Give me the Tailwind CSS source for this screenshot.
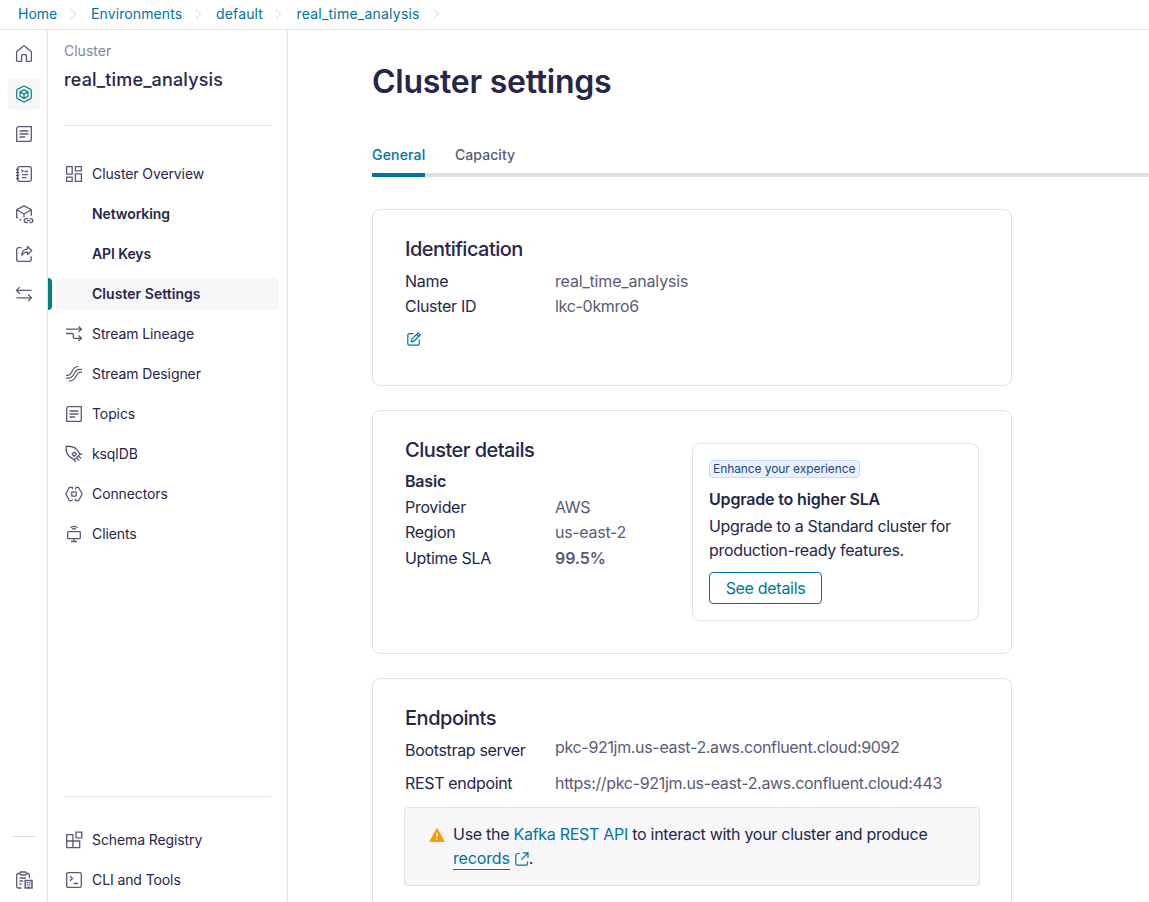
<!DOCTYPE html>
<html lang="en">
<head>
<meta charset="utf-8">
<title>Cluster settings</title>
<script src="https://cdn.jsdelivr.net/npm/@tailwindcss/browser@4"></script>
</head>
<body class="h-[902px] w-[1149px] overflow-hidden bg-white font-['Inter',sans-serif] text-[#26264b]">
<div class="flex h-full flex-col">
  <header class="flex h-[30px] shrink-0 items-center border-b border-[#e4e4ea] pb-px pl-[18px] text-sm text-[#0074a2]">
    <a class="w-[39px] whitespace-nowrap">Home</a>
    <svg class="ml-3 mr-[14px] h-3 w-2" viewBox="0 0 8 12" fill="none" stroke="#d0d0dc"><path d="M1.5 1l5 5-5 5"/></svg>
    <a class="w-[91px] tracking-[0.1px] whitespace-nowrap">Environments</a>
    <svg class="ml-3 mr-[14px] h-3 w-2" viewBox="0 0 8 12" fill="none" stroke="#d0d0dc"><path d="M1.5 1l5 5-5 5"/></svg>
    <a class="w-[46px] tracking-[0.15px] whitespace-nowrap">default</a>
    <svg class="ml-3 mr-[14px] h-3 w-2" viewBox="0 0 8 12" fill="none" stroke="#d0d0dc"><path d="M1.5 1l5 5-5 5"/></svg>
    <a class="w-[124px] pl-[0.5px] tracking-[0.22px] whitespace-nowrap">real_time_analysis</a>
    <svg class="ml-3 h-3 w-2" viewBox="0 0 8 12" fill="none" stroke="#d0d0dc"><path d="M1.5 1l5 5-5 5"/></svg>
  </header>

  <div class="flex min-h-0 flex-1">
    <nav class="flex w-12 shrink-0 flex-col items-center gap-2 border-r border-[#e4e4ea] pt-2 pb-[6px] pl-px text-[#5a5a78]">
      <a class="grid size-8 shrink-0 place-items-center"><svg class="size-[18px]" viewBox="0 0 18 18" fill="none" stroke="currentColor" stroke-width="1.3" stroke-linejoin="round"><path d="M6.6 16.4H2.8a1.2 1.2 0 0 1-1.2-1.2V7.2c0-.4.2-.8.5-1L8.3 1.200a1.100 1.100 0 0 1 1.400 0l6.200 5c.3.2.5.6.5 1v8a1.200 1.200 0 0 1-1.200 1.200h-3.800v-6a.8.8 0 0 0-.8-.8H7.400a.8.8 0 0 0-.8.8z"/></svg></a>
      <a class="grid size-8 shrink-0 place-items-center rounded bg-[#f7f7fa] text-[#00807f]"><svg class="size-[18px]" viewBox="0 0 18 18" fill="none" stroke="currentColor" stroke-width="1.200" stroke-linejoin="round"><path d="M8.300 1.200a1.400 1.400 0 0 1 1.400 0l5.900 3.200c.4.3.7.7.7 1.200v6.800c0 .5-.3.900-.7 1.200l-5.900 3.200a1.400 1.400 0 0 1-1.400 0l-5.900-3.200a1.400 1.400 0 0 1-.7-1.200V5.600c0-.5.3-.9.7-1.200z"/><path d="M9 4.700l4 2.200v4.300l-4 2.200-4-2.200V6.900zM5 6.900l4 2.200 4-2.200M9 9.100v4.300"/></svg></a>
      <a class="grid size-8 shrink-0 place-items-center"><svg class="size-[18px]" viewBox="0 0 18 18" fill="none" stroke="currentColor" stroke-width="1.3"><path d="M3.600 1.700h12.700v12.700a2 2 0 0 1-2 2H1.700V3.600a2 2 0 0 1 1.900-1.900zM4.500 6h9M4.500 9h9M4.500 12h5.500"/></svg></a>
      <a class="grid size-8 shrink-0 place-items-center"><svg class="size-[18px]" viewBox="0 0 18 18" fill="none" stroke="currentColor" stroke-width="1.3"><rect x="2.700" y="1.700" width="13.600" height="14.600" rx="1.800"/><path d="M1 4.500h3.200M1 7.500h3.200M1 10.500h3.200M1 13.500h3.200M6.500 4.700L8 6 6.500 7.300M9.500 6.500H13M7 9.700h6M7 12.700h4.500"/></svg></a>
      <a class="grid size-8 shrink-0 place-items-center"><svg class="size-[18px] overflow-visible" viewBox="0 0 18 18" fill="none" stroke="currentColor" stroke-width="1.300" stroke-linejoin="round"><path d="M6.200 15.100l-1.600-.9M3 13.200l-1.300-.8V4.700L9 .9l7.300 3.800v6M1.700 4.800L9 9l7.300-4.200M9 9v3.500"/><path d="M13 13.600h-1.800a2 2 0 0 0 0 4H13M14.500 13.600h1.300a2 2 0 0 1 0 4h-1.300M11.800 15.600h3.600"/></svg></a>
      <a class="grid size-8 shrink-0 place-items-center"><svg class="size-[18px]" viewBox="0 0 18 18" fill="none" stroke="currentColor" stroke-width="1.300" stroke-linejoin="round"><path d="M6.500 2.700H3.700a2 2 0 0 0-2 2v9.600a2 2 0 0 0 2 2h10.500a2 2 0 0 0 2-2v-3"/><path d="M12.500 1.500l4.200 4-4.200 4V7.200C9.800 7 8 8.200 6.800 10.400 6.700 6.700 9 4 12.500 3.800z"/></svg></a>
      <a class="grid size-8 shrink-0 place-items-center"><svg class="size-[18px]" viewBox="0 0 18 18" fill="none" stroke="currentColor" stroke-width="1.300"><path d="M4.800 2.100L1.500 5.400l3.300 3.300M1.500 5.400h15M13.200 9.500l3.300 3.300-3.300 3.300M16.500 12.800h-15"/></svg></a>
      <div class="mt-auto mr-px mb-[19px] h-px w-[23px] bg-[#dcdce6]"></div>
      <a class="grid size-8 shrink-0 place-items-center"><svg class="size-[18px]" viewBox="0 0 18 18" fill="none" stroke="currentColor" stroke-width="1.300"><path d="M4.800 2.500H3.200a1.500 1.500 0 0 0-1.500 1.500v11.500A1.500 1.500 0 0 0 3.200 17h3.300M11.500 2.500h1.300A1.500 1.500 0 0 1 14.300 4v3M4.500 7h6.500M4.500 10h3.500M4.500 13h2"/><rect x="5" y="1" width="6.300" height="3" rx="1"/><path stroke-width="1.500" d="M10.200 9.500h6.800v7.500h-6.800zM12.500 11v1.300M14.800 11v1.300M12.500 13.200v1.200M14.800 13.200v1.200M13.600 17v-1.700"/></svg></a>
    </nav>

    <aside class="flex w-60 shrink-0 flex-col border-r border-[#e4e4ea] text-sm">
      <div class="px-4 pt-[11px]">
        <p class="leading-5 text-[#8585a0]">Cluster</p>
        <h2 class="mt-[7px] text-lg leading-6 font-medium tracking-[0.15px]">real_time_analysis</h2>
        <hr class="mt-[33px] border-[#e4e4ea]">
      </div>
      <ul class="mt-8 flex flex-col gap-2 leading-5 tracking-[-0.1px]">
        <li class="flex h-8 items-center pl-[17px]"><svg class="mr-[9px] size-[18px] text-[#5a5a78]" viewBox="0 0 18 18" fill="none" stroke="currentColor" stroke-width="1.300"><path d="M1.600 1.600h5.600v7.600H1.600zM10.400 1.600h6v4.200h-6zM10.400 8.800h6v7.600h-6zM1.600 12.200h5.600v4.200H1.600z"/></svg>Cluster Overview</li>
        <li class="flex h-8 items-center pl-11 font-semibold">Networking</li>
        <li class="flex h-8 items-center pl-11 font-semibold">API Keys</li>
        <li class="flex h-8 items-center font-semibold"><span class="h-8 w-1 rounded-r bg-[#00807f]"></span><span class="ml-1 mr-2 flex h-8 flex-1 items-center rounded bg-[#f7f7fa] pl-9 tracking-[0.04px]">Cluster Settings</span></li>
        <li class="flex h-8 items-center pl-[17px]"><svg class="mr-[9px] size-[18px] text-[#5a5a78]" viewBox="0 0 18 18" fill="none" stroke="currentColor" stroke-width="1.300"><path d="M1 4.200h15.500M13.500 1.500l3 2.700-3 2.700M1 8.500h6.300a1 1 0 0 1 1 1v2.800a1 1 0 0 0 1 1h7.200M13.500 10.600l3 2.700-3 2.700"/></svg>Stream Lineage</li>
        <li class="flex h-8 items-center pl-[17px]"><svg class="mr-[9px] size-[18px] text-[#5a5a78]" viewBox="0 0 18 18" fill="none" stroke="currentColor" stroke-width="1.200"><path d="M1 10.400h1.500C8.300 10.400 5.500 1.500 13.500 1.500M1 13.100h2C10.600 13.100 8 4.300 14.500 4.300H17M4 16.200C12.500 16.200 10.500 7.100 15 7.100h2"/></svg>Stream Designer</li>
        <li class="flex h-8 items-center pl-[17px]"><svg class="mr-[9px] size-[18px] text-[#5a5a78]" viewBox="0 0 18 18" fill="none" stroke="currentColor" stroke-width="1.300"><path d="M3.600 1.700h12.700v12.700a2 2 0 0 1-2 2H1.700V3.600a2 2 0 0 1 1.900-1.900zM4.500 6h9M4.500 9h9M4.500 12h5.500"/></svg>Topics</li>
        <li class="flex h-8 items-center pl-[17px]"><svg class="mr-[9px] size-[18px] text-[#5a5a78]" viewBox="0 0 18 18" fill="none" stroke="currentColor" stroke-width="1.300" stroke-linejoin="round"><path d="M1 1.300c4.500-.3 8.500.5 11 3.400l3 4.400-5.700 5.800-4.500-3C1.800 9.300.8 5.800 1 1.300z"/><path d="M9.300 7l2.200 2.200-2.200 2.200-2.200-2.200zM15 9.100l2.300.2M13.300 10.900l2.900 2.700M11.600 12.700l2.600 2.900M9.300 14.900l1.200 2"/></svg>ksqlDB</li>
        <li class="flex h-8 items-center pl-[17px]"><svg class="mr-[9px] size-[18px] text-[#5a5a78]" viewBox="0 0 18 18" fill="none" stroke="currentColor" stroke-width="1.300" stroke-linejoin="round"><path d="M7.400 4.200V2.300H4.500L.8 9l3.700 6.700h1.800a1.100 1.100 0 0 0 1.100-1.100M10.600 13.800v1.900h2.900L17.200 9l-3.700-6.700h-1.800a1.100 1.100 0 0 0-1.100 1.100v1"/><rect x="6.800" y="6.800" width="4.400" height="4.400" rx=".5"/></svg>Connectors</li>
        <li class="flex h-8 items-center pl-[17px]"><svg class="mr-[9px] size-[18px] text-[#5a5a78]" viewBox="0 0 18 18" fill="none" stroke="currentColor" stroke-width="1.300"><rect x="2.700" y="6.700" width="12.600" height="7" rx=".6"/><path d="M9 13.700v2.600M6 16.500h6M5.500 2.700C7.300.8 10.700.8 12.500 2.700M7.200 4.300c1-.9 2.600-.9 3.600 0"/></svg>Clients</li>
      </ul>
      <div class="mt-auto px-4"><hr class="border-[#e4e4ea]"></div>
      <ul class="mt-[27px] flex flex-col gap-2 pb-[6px] leading-5 tracking-[-0.1px]">
        <li class="flex h-8 items-center pl-[17px]"><svg class="mr-[9px] size-[18px] text-[#5a5a78]" viewBox="0 0 18 18" fill="none" stroke="currentColor" stroke-width="1.300"><path d="M7.900 16.600H1.700v-13h6.200zM1.700 10h13v6.600H7.900V10M11 1.200h5.700v5.700H11z"/></svg>Schema Registry</li>
        <li class="flex h-8 items-center pl-[17px]"><svg class="mr-[9px] size-[18px] text-[#5a5a78]" viewBox="0 0 18 18" fill="none" stroke="currentColor" stroke-width="1.300"><rect x="1.700" y="1.700" width="14.600" height="14.600" rx="1.200"/><path d="M5 5l2.500 2.400L5 9.800M8.500 12.500h4.500"/></svg>CLI and Tools</li>
      </ul>
    </aside>

    <main class="flex min-w-0 flex-1 flex-col pl-[84px]">
      <h1 class="pt-8 text-[32px] leading-10 font-semibold tracking-[-0.26px]">Cluster settings</h1>
      <div class="mt-[41px] flex h-[34px] shrink-0 gap-[30px] border-b-4 border-[#dedee8] text-sm leading-5 font-medium text-[#5a5a78]">
        <a class="h-[34px] w-[53px] border-b-4 border-[#0074a2] pt-[2px] tracking-[0.18px] whitespace-nowrap text-[#0074a2]">General</a>
        <a class="pt-[2px] tracking-[0.06px]">Capacity</a>
      </div>

      <section class="mt-8 h-[177px] w-[640px] shrink-0 rounded-lg border border-[#e0e0e8] px-8 pt-6">
        <h3 class="text-xl leading-[30px] font-medium tracking-[-0.53px]">Identification</h3>
        <dl class="mt-[5px] grid grid-cols-[150px_1fr] text-base leading-[25px] tracking-[-0.3px]">
          <dt>Name</dt><dd class="tracking-[-0.17px] text-[#5a5a78]">real_time_analysis</dd>
          <dt>Cluster ID</dt><dd class="text-[#5a5a78]">lkc-0kmro6</dd>
        </dl>
        <svg class="mt-[13px] ml-[2px] size-[14px]" viewBox="0 0 14 14" fill="none" stroke="#0074a2" stroke-width="1.200" stroke-linejoin="round"><path d="M6.500 1.700H2.200A1.400 1.400 0 0 0 .8 3.100v8.600a1.400 1.400 0 0 0 1.400 1.400h8.600a1.400 1.400 0 0 0 1.400-1.400V7.400"/><path d="M11 .8l2.200 2.200-6.300 6.200-2.700.6.600-2.700zM9.500 2.300l2.200 2.200"/></svg>
      </section>

      <section class="mt-6 flex h-[244px] w-[640px] shrink-0 justify-between rounded-lg border border-[#e0e0e8] pt-6 pr-8 pl-8">
        <div>
          <h3 class="text-xl leading-[30px] font-medium tracking-[-0.53px]">Cluster details</h3>
          <p class="mt-1 text-base leading-[25px] font-semibold tracking-[-0.2px]">Basic</p>
          <dl class="grid grid-cols-[150px_1fr] pt-px text-base leading-[25.300px] tracking-[-0.3px]">
            <dt>Provider</dt><dd class="text-[#5a5a78]">AWS</dd>
            <dt>Region</dt><dd class="text-[#5a5a78]">us-east-2</dd>
            <dt>Uptime SLA</dt><dd class="font-semibold tracking-[-0.1px] text-[#5a5a78]">99.5%</dd>
          </dl>
        </div>
        <div class="mt-2 h-[178px] w-[287px] rounded-lg border border-[#e0e0e8] px-4 pt-4">
          <span class="flex h-[18px] w-[151px] items-center rounded border border-[#c5dbfb] bg-[#ebf2fe] pl-[3px] text-xs tracking-[-0.08px] whitespace-nowrap text-[#21488a]">Enhance your experience</span>
          <p class="mt-[9px] text-base leading-6 font-semibold tracking-[-0.17px]">Upgrade to higher SLA</p>
          <p class="mt-[3px] text-base leading-6 tracking-[-0.33px]">Upgrade to a Standard cluster for production-ready features.</p>
          <button class="mt-[10px] flex h-8 w-[113px] items-center justify-center rounded border border-[#0074a2] text-base tracking-[-0.3px] text-[#0074a2]">See details</button>
        </div>
      </section>

      <section class="mt-6 min-h-0 w-[640px] flex-1 overflow-hidden rounded-t-lg border border-b-0 border-[#e0e0e8] pt-6 pl-8">
        <h3 class="text-xl leading-[30px] font-medium tracking-[-0.48px]">Endpoints</h3>
        <dl class="mt-px grid grid-cols-[150px_1fr] text-base tracking-[-0.33px]">
          <dt class="pt-[3px] leading-[26px]">Bootstrap server</dt><dd class="leading-[26px] text-[#5a5a78]">pkc-921jm.us-east-2.aws.confluent.cloud:9092</dd>
          <dt class="pt-2 leading-6">REST endpoint</dt><dd class="pt-2 leading-6 text-[#5a5a78]">https://pkc-921jm.us-east-2.aws.confluent.cloud:443</dd>
        </dl>
        <div class="mt-3 -ml-px flex h-[79px] w-[576px] rounded-sm border border-[#e0e0e8] bg-[#f7f7fa] pt-[14px] pl-6">
          <svg class="mt-[6px] mr-2 h-[14px] w-4 shrink-0" viewBox="0 0 16 14"><path d="M8 .5L15.300 13.500H.7z" fill="#ff9500" stroke="#ff9500" stroke-linejoin="round" stroke-width=".8"/><path d="M8 4.800v4.200M8 10.300v1.600" stroke="#fff" stroke-width="1.500"/></svg>
          <p class="text-base leading-6 tracking-[-0.28px] whitespace-nowrap">Use the <a class="text-[#0074a2]">Kafka REST API</a> to interact with your cluster and produce<br><a class="inline-block border-b border-[#0074a2] leading-[21px] tracking-[-0.15px] text-[#0074a2]">records</a><svg class="ml-[5px] inline size-[14px] align-[-2px]" viewBox="0 0 14 14" fill="none" stroke="#0074a2" stroke-width="1.200"><path d="M4.500 1.500H2.400A1.600 1.600 0 0 0 .8 3.100v8.500a1.600 1.600 0 0 0 1.600 1.600h8.500a1.600 1.600 0 0 0 1.600-1.600V9.500M8 .9h5v5M13 .9L6.500 7.500"/></svg>.</p>
        </div>
      </section>
    </main>
  </div>
</div>
</body>
</html>
